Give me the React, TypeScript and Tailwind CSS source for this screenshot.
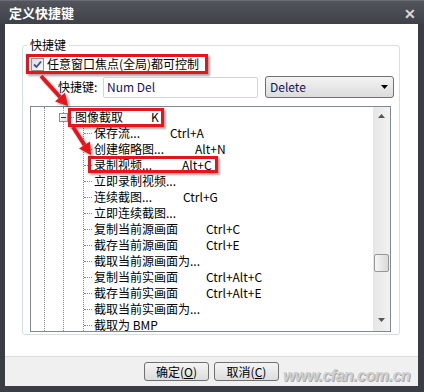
import React from 'react';

const font = { fontFamily: '"Noto Sans CJK SC", "Noto Sans", sans-serif' };

type Item = { text: string; key?: string; w?: string };

const items: Item[] = [
  { text: '保存流...', key: 'Ctrl+A', w: 'w-[76px]' },
  { text: '创建缩略图...', key: 'Alt+N', w: 'w-[101px]' },
  { text: '录制视频...', key: 'Alt+C', w: 'w-[88px]' },
  { text: '立即录制视频...' },
  { text: '连续截图...', key: 'Ctrl+G', w: 'w-[89px]' },
  { text: '立即连续截图...' },
  { text: '复制当前源画面', key: 'Ctrl+C', w: 'w-[112px]' },
  { text: '截存当前源画面', key: 'Ctrl+E', w: 'w-[112px]' },
  { text: '截取当前源画面为...' },
  { text: '复制当前实画面', key: 'Ctrl+Alt+C', w: 'w-[112px]' },
  { text: '截存当前实画面', key: 'Ctrl+Alt+E', w: 'w-[112px]' },
  { text: '截取当前实画面为...' },
  { text: '截取为 BMP' },
];

function Arrows() {
  return (
    <svg
      className="pointer-events-none absolute inset-0 drop-shadow-[2px_2px_1px_rgba(0,0,0,0.35)]"
      width="424"
      height="392"
    >
      <line x1="41" y1="76" x2="60" y2="97" stroke="#e8141a" strokeWidth="4" />
      <polygon points="68,106 55,101.5 65,92.5" fill="#e8141a" />
      <line x1="73" y1="127" x2="84.5" y2="145" stroke="#e8141a" strokeWidth="4" />
      <polygon points="91,155 79,148.5 90,141.5" fill="#e8141a" />
    </svg>
  );
}

function Checkbox() {
  return (
    <div className="flex h-[13px] w-[13px] items-center justify-center border border-[#8f8f8f] bg-gradient-to-br from-[#dcdcdc] to-[#fafafa]">
      <svg width="9" height="9" viewBox="0 0 9 9">
        <path d="M1 4.5 L3.5 7 L8 1.5" fill="none" stroke="#3a4e9a" strokeWidth="1.8" />
      </svg>
    </div>
  );
}

function Button({ label, hot }: { label: string; hot: string }) {
  return (
    <div className="flex h-[19px] w-[65px] items-center justify-center rounded-[3px] border border-[#707070] bg-gradient-to-b from-[#f4f4f4] to-[#dddddd] text-[12px] leading-[17px] text-black">
      {label}(<span className="underline">{hot}</span>)
    </div>
  );
}

export default function App() {
  return (
    <div
      className="relative flex h-[392px] w-[424px] flex-col bg-[#3b3d45] text-[12px] text-black"
      style={font}
    >
      {/* title bar */}
      <div className="flex h-[24px] items-center justify-between border-t border-[#6a6c74] bg-gradient-to-b from-[#53555d] to-[#3f4149] pl-[9px] pr-[8px]">
        <span className="text-[13px] font-bold leading-[16px] text-white">定义快捷键</span>
        <span className="text-[14px] font-bold leading-[16px] text-[#d8d8d8]">✕</span>
      </div>

      {/* client */}
      <div className="ml-[5px] mr-[6px] mb-[6px] flex flex-1 flex-col bg-white">
        <div className="flex-1 pl-[17px] pr-[18px] pt-[21px]">
          <div className="relative flex h-[290px] flex-col rounded-[3px] border border-[#d5dfe5] pl-[3px] pt-[8px]">
            <span className="absolute left-[4px] top-[-8px] bg-white px-[3px] leading-[14px]">快捷键</span>

            <div className="flex h-[20px] w-[182px] items-center gap-[3px] border-[3px] border-[#e8141a] pl-[2px] shadow-[2px_2px_2px_rgba(0,0,0,0.35)]">
              <Checkbox />
              <span className="leading-[14px]">任意窗口焦点(全局)都可控制</span>
            </div>

            <div className="mt-[2px] flex h-[22px] items-center">
              <span className="ml-[32px] w-[45px] leading-[14px]">快捷键:</span>
              <div className="flex h-[21px] w-[155px] items-center rounded-[2px] border border-[#cfd6dc] pl-[3px] leading-[14px] text-[#14145a]">
                Num Del
              </div>
              <div className="ml-[7px] flex h-[22px] w-[129px] items-center justify-between rounded-[3px] border border-[#707070] bg-gradient-to-b from-[#f3f3f3] to-[#dcdcdc] pl-[4px] pr-[5px] leading-[14px] text-[#14145a]">
                <span>Delete</span>
                <svg width="7" height="4" viewBox="0 0 7 4">
                  <path d="M0 0 H7 L3.5 4 Z" fill="#000" />
                </svg>
              </div>
            </div>

            {/* tree list */}
            <div className="ml-[4px] mt-[8px] flex h-[226px] w-[361px] border border-[#828790]">
              <div className="relative flex-1 overflow-hidden pt-[2px]">
                <div className="absolute bottom-0 left-[13px] top-0 border-l border-dotted border-[#8a8a8a]" />
                <div className="absolute bottom-0 left-[32px] top-0 border-l border-dotted border-[#8a8a8a]" />
                <div className="absolute bottom-0 left-[52px] top-[10px] border-l border-dotted border-[#8a8a8a]" />

                <div className="relative flex h-[16px] items-center pl-[28px] leading-[16px]">
                  <div className="flex h-[9px] w-[9px] items-center justify-center border border-[#919191] bg-gradient-to-br from-white to-[#dedede]">
                    <div className="h-[1px] w-[5px] bg-[#333]" />
                  </div>
                  <span className="ml-[1px] w-[5px] border-t border-dotted border-[#8a8a8a]" />
                  <span className="ml-[1px] w-[76px]">图像截取</span>
                  <span>K</span>
                </div>

                {items.map((it) => (
                  <div key={it.text} className="relative flex h-[16px] items-center pl-[53px] leading-[16px]">
                    <span className="mr-[2px] w-[8px] border-t border-dotted border-[#8a8a8a]" />
                    <span className={it.w ?? ''}>{it.text}</span>
                    {it.key && <span>{it.key}</span>}
                  </div>
                ))}

                <div className="absolute left-[37px] top-[1px] h-[19px] w-[96px] border-[3px] border-[#e8141a] shadow-[2px_2px_2px_rgba(0,0,0,0.35)]" />
                <div className="absolute left-[57px] top-[49px] h-[17px] w-[130px] border-[3px] border-[#e8141a] shadow-[2px_2px_2px_rgba(0,0,0,0.35)]" />
              </div>

              {/* scrollbar */}
              <div className="flex w-[17px] flex-col items-center bg-gradient-to-r from-[#e6e6e6] to-[#f2f2f2]">
                <div className="flex h-[17px] items-center justify-center">
                  <svg width="7" height="4" viewBox="0 0 7 4">
                    <path d="M0 4 H7 L3.5 0 Z" fill="#555" />
                  </svg>
                </div>
                <div className="mt-[130px] h-[18px] w-[15px] rounded-[2px] border border-[#979797] bg-gradient-to-r from-[#f5f5f5] to-[#d9d9d9]" />
                <div className="flex-1" />
                <div className="flex h-[17px] items-start justify-center pt-[4px]">
                  <svg width="7" height="4" viewBox="0 0 7 4">
                    <path d="M0 0 H7 L3.5 4 Z" fill="#555" />
                  </svg>
                </div>
              </div>
            </div>
          </div>
        </div>

        {/* buttons */}
        <div className="flex h-[30px] items-center border-t border-[#dcdcdc] bg-[#f0f0f0] pl-[139px]">
          <Button label="确定" hot="O" />
          <div className="ml-[5px]">
            <Button label="取消" hot="C" />
          </div>
          <span
            className="ml-[4px] mt-[8px] text-[16px] font-bold italic leading-[16px] tracking-[-0.5px] text-[#cfcfcf] [text-shadow:1px_1px_0_#a8a8a8]"
            style={{ fontFamily: '"Liberation Sans", sans-serif' }}
          >
            www.cfan.com.cn
          </span>
        </div>
      </div>

      <Arrows />
    </div>
  );
}
